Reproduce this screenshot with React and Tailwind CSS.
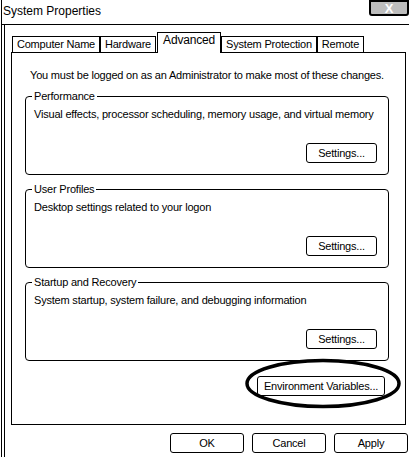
import React from 'react';

const tabs = [
  { label: 'Computer Name', w: 'w-[88px]' },
  { label: 'Hardware', w: 'w-[56px]' },
  { label: 'Advanced', w: 'w-[64px] ml-[1px]', active: true },
  { label: 'System Protection', w: 'w-[96px]' },
  { label: 'Remote', w: 'w-[47px]' },
];

function Btn({ children, className = '' }) {
  return (
    <div
      className={`flex items-center justify-center h-[20px] border border-black rounded-[3px] bg-white ${className}`}
    >
      {children}
    </div>
  );
}

function Group({ title, text }) {
  return (
    <fieldset className="w-[364px] ml-[13px] border border-black rounded-[4px] pl-[8px] pr-[11px]">
      <legend className="px-[2px] -ml-[2px]">{title}</legend>
      <div className="flex flex-col justify-between h-[71px]">
        <div className="whitespace-nowrap pt-[5px]">{text}</div>
        <div className="flex justify-end pb-[11px]">
          <Btn className="w-[71px]">Settings...</Btn>
        </div>
      </div>
    </fieldset>
  );
}

export default function App() {
  return (
    <div className="relative w-[409px] h-[457px] bg-white overflow-hidden text-black text-[11px] leading-[13px] tracking-[-0.2px] font-['Liberation_Sans',Arial,sans-serif]">
      <div className="ml-[1px] h-full border-l border-black flex flex-col">
        {/* title bar */}
        <div className="h-[25px] border-b border-black flex justify-between items-start shrink-0">
          <div className="pl-[1px] pt-[4px] text-[12px] leading-[14px] tracking-normal">System Properties</div>
          <div className="w-[40px] h-[16px] border-2 border-black rounded-b-[3px] bg-[#bdbdbd] flex items-center justify-center text-[13px] font-bold leading-none text-white">
            X
          </div>
        </div>

        {/* body */}
        <div className="flex-1 ml-[2px] border-l border-black flex flex-col">
          <div className="flex items-end pt-[7px] pl-[7px]">
            {tabs.map((t) =>
              t.active ? (
                <div
                  key={t.label}
                  className={`${t.w} h-[21px] -mb-[1px] relative z-10 bg-white border border-b-0 border-black flex justify-center pt-[1px] text-[12px]`}
                >
                  {t.label}
                </div>
              ) : (
                <div
                  key={t.label}
                  className={`${t.w} h-[16px] border border-b-0 border-black flex items-center justify-center whitespace-nowrap`}
                >
                  {t.label}
                </div>
              )
            )}
          </div>

          <div className="ml-[6px] w-[395px] h-[373px] border border-black flex flex-col">
            <div className="pl-[18px] pt-[16px]">
              You must be logged on as an Administrator to make most of these changes.
            </div>
            <div className="mt-[8px] flex flex-col gap-[8px]">
              <Group
                title="Performance"
                text="Visual effects, processor scheduling, memory usage, and virtual memory"
              />
              <Group title="User Profiles" text="Desktop settings related to your logon" />
              <Group
                title="Startup and Recovery"
                text="System startup, system failure, and debugging information"
              />
            </div>
            <div className="flex justify-end pr-[20px] mt-[15px]">
              <Btn className="w-[128px] h-[19px]">Environment Variables...</Btn>
            </div>
          </div>

          <div className="flex justify-end gap-[8px] mt-[8px] mr-[1px]">
            <Btn className="w-[74px]">OK</Btn>
            <Btn className="w-[74px]">Cancel</Btn>
            <Btn className="w-[74px]">Apply</Btn>
          </div>
        </div>
      </div>

      {/* hand-drawn highlight */}
      <svg className="absolute left-[244px] top-[358px] pointer-events-none" width="158" height="51" viewBox="0 0 158 51">
        <ellipse cx="79" cy="25.5" rx="76" ry="23" fill="none" stroke="black" strokeWidth="3.5" />
      </svg>
    </div>
  );
}
